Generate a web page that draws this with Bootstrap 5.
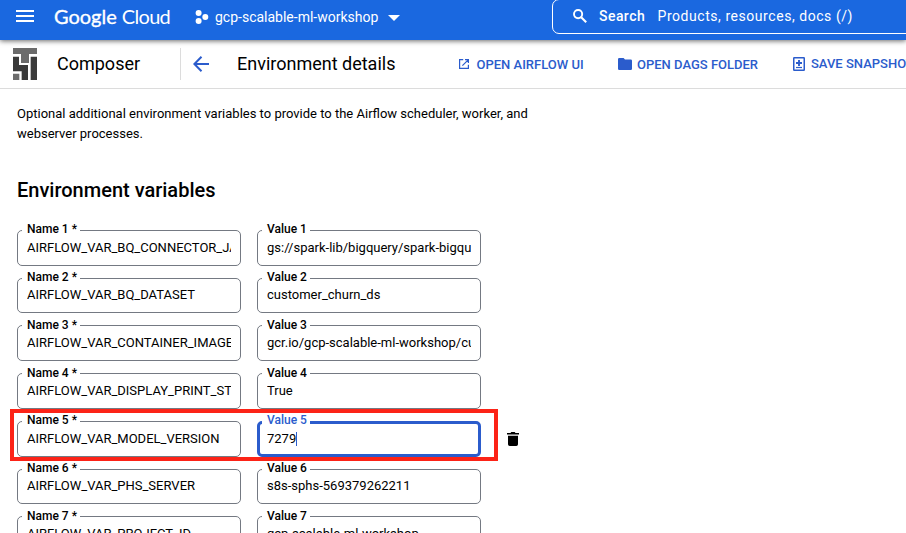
<!DOCTYPE html>
<html lang="en">
<head>
<meta charset="utf-8">
<title>Environment details – Composer</title>
<meta name="viewport" content="width=device-width, initial-scale=1">
<link href="https://cdn.jsdelivr.net/npm/bootstrap@5.3.0/dist/css/bootstrap.min.css" rel="stylesheet">
<script src="https://cdn.jsdelivr.net/npm/bootstrap@5.3.0/dist/js/bootstrap.bundle.min.js"></script>
<style>
  body { font-family: Roboto, "Liberation Sans", sans-serif; color: #000; font-size: 13px; height: 533px; overflow: hidden; }
  svg { display: block; flex: none; }
  .topbar > *, .subbar > * { flex-shrink: 0; }
  .topbar { height: 40px; background: #1a68e0; color: #fff; box-shadow: 0 1px 5px rgba(0,0,0,.6); padding-left: 16px; }
  .burger { margin-top: 10px; }
  .brand { font-family: Lato, Roboto, sans-serif; font-size: 20px; line-height: 32px; margin-left: 20px; width: 121px; }
  .brand .g { -webkit-text-stroke: .35px #fff; }
  .brand .c { letter-spacing: -.7px; margin-left: 5px; }
  .project { font-size: 14px; line-height: 34px; width: 357px; margin-left: 20px; }
  .dots { margin: 10px 6px 0 0; }
  .caret { margin: 15px 0 0 9.5px; }
  .searchbox { width: 362px; height: 35px; margin-top: -1px; border: 1px solid #fff; border-radius: 7px; padding-left: 20px; font-size: 14px; line-height: 32px; }
  .lens { margin: 9px 12px 0 0; }
  .searchbox .s { font-weight: 500; letter-spacing: .45px; width: 58.5px; }
  .searchbox .q { letter-spacing: .55px; }
  .subbar { height: 49px; border-bottom: 1px solid #dcdcdc; padding-left: 13px; }
  .title { font-size: 18px; line-height: 48px; }
  .t1 { margin-left: 20px; width: 123px; }
  .rule { width: 1px; height: 32px; background: #dcdcdc; margin: 8px 12px 0 0; }
  .t2 { margin-left: 28px; width: 222px; }
  .action { color: #2b5ccc; font-weight: 500; line-height: 49px; }
  .open-ui { width: 159px; }
  .open-ui svg { margin: 19px 7.500px 0 0; }
  .open-dags { width: 175px; }
  .open-dags svg { margin: 18px 5px 0 0; }
  .save { line-height: 47px; }
  .save svg { margin: 17px 6px 0 0; }
  .main { padding: 15px 0 0 17px; }
  .intro { width: 530px; line-height: 20px; margin-bottom: 34px; }
  .section-title { font-size: 20px; font-weight: 500; line-height: 24px; margin-bottom: 28px; }
  .vars { display: grid; grid-auto-rows: 35.7px; row-gap: 12.035px; }
  .pair { gap: 16px; }
  .field { width: 224px; height: 35.7px; border: 1px solid #747982; border-radius: 5px; padding: 0 9px; position: relative; }
  .field label { position: absolute; top: -9.55px; left: 4px; padding: 0 3px 0 5px; background: #fff; font-size: 12px; line-height: 16px; font-weight: 500; white-space: nowrap; }
  .value { line-height: 33px; margin-top: -.25px; overflow: hidden; white-space: nowrap; }
  .active { border: 3px solid #2b5ccc; padding: 0 7px; }
  .active label { top: -11.55px; left: 2px; color: #2b5ccc; }
  .active .value { line-height: 29px; }
  .cursor { display: inline-block; width: 1px; height: 14px; background: #2b5ccc; vertical-align: -3px; }
  .marked { position: relative; }
  .marked::after { content: ""; position: absolute; z-index: 1; left: -7px; top: -12px; width: 488px; height: 52px; border: 4px solid #fc2317; pointer-events: none; }
  .bin { margin: 11px 0 0 10px; }
</style>
</head>
<body>
<header class="topbar d-flex align-items-start position-relative">
  <svg class="burger" width="18" height="12" viewBox="0 0 18 12" fill="#fff"><path d="M0 0h18v2H0zM0 5h18v2H0zM0 10h18v2H0z"/></svg>
  <div class="brand text-nowrap"><span class="g">Google</span><span class="c">Cloud</span></div>
  <div class="project d-flex align-items-start">
    <svg class="dots" width="14" height="14" viewBox="0 0 14 14" fill="#fff"><circle cx="3.6" cy="3" r="3"/><circle cx="3.6" cy="11" r="3"/><circle cx="10.3" cy="7" r="3"/></svg>
    <span>gcp-scalable-ml-workshop</span>
    <svg class="caret" width="12" height="6" viewBox="0 0 12 6" fill="#fff"><path d="M0 0h12L6 6z"/></svg>
  </div>
  <div class="searchbox d-flex align-items-start">
    <svg class="lens" width="14" height="14" viewBox="0 0 14 14" fill="none" stroke="#fff"><circle cx="5.1" cy="5.1" r="4.1" stroke-width="1.9"/><path d="M8.2 8.2l5 5" stroke-width="2.1"/></svg>
    <span class="s">Search</span><span class="q text-nowrap">Products, resources, docs (/)</span>
  </div>
</header>

<div class="subbar d-flex align-items-start text-nowrap overflow-hidden">
  <svg class="mt-2" width="24" height="32" viewBox="0 0 72 96"><path fill="#6b6b6b" d="M0 0h72v18H48v27H24V18H0zM0 77h19v19H0z"/><path fill="#3a3a3a" d="M0 26h18v25h27v45H26V70H0zM53 26h19v70H53z"/></svg>
  <div class="title t1">Composer</div>
  <div class="rule"></div>
  <svg class="mt-3" width="16" height="16" viewBox="0 0 16 16" fill="none" stroke="#2b5ccc" stroke-width="2"><path d="M16 8H1.5M8.5.8L1.4 8l7.1 7.2"/></svg>
  <div class="title t2">Environment details</div>
  <div class="action open-ui d-flex align-items-start">
    <svg width="10" height="10" viewBox="0 0 10 10" fill="none" stroke="#2b5ccc" stroke-width="1.2"><path d="M4.2.6H.6v8.8h8.8V5.8M6 .6h3.4V4M9.2.8L3.4 6.6"/></svg>OPEN AIRFLOW UI
  </div>
  <div class="action open-dags d-flex align-items-start">
    <svg width="14" height="12" viewBox="0 0 14 12" fill="#2b5ccc"><path d="M1.2 0H5.6L7 1.5h5.8Q14 1.5 14 2.7v8.1Q14 12 12.8 12H1.2Q0 12 0 10.8V1.2Q0 0 1.2 0z"/></svg>OPEN DAGS FOLDER
  </div>
  <div class="action save d-flex align-items-start">
    <svg width="12" height="14" viewBox="0 0 12 14" fill="none" stroke="#2b5ccc"><rect x=".75" y=".75" width="10.5" height="12.5" rx=".5" stroke-width="1.5"/><path d="M6 3v6M3 6h6" stroke-width="1.9"/><path d="M3 10.5h6" stroke-width="1.2"/></svg>SAVE SNAPSHOT
  </div>
</div>

<main class="main">
  <p class="intro">Optional additional environment variables to provide to the Airflow scheduler, worker, and webserver processes.</p>
  <h2 class="section-title">Environment variables</h2>
  <div class="vars">
    <div class="pair d-flex">
      <div class="field"><label>Name 1 *</label><div class="value">AIRFLOW_VAR_BQ_CONNECTOR_JAR</div></div>
      <div class="field"><label>Value 1</label><div class="value">gs://spark-lib/bigquery/spark-bigquery</div></div>
    </div>
    <div class="pair d-flex">
      <div class="field"><label>Name 2 *</label><div class="value">AIRFLOW_VAR_BQ_DATASET</div></div>
      <div class="field"><label>Value 2</label><div class="value">customer_churn_ds</div></div>
    </div>
    <div class="pair d-flex">
      <div class="field"><label>Name 3 *</label><div class="value">AIRFLOW_VAR_CONTAINER_IMAGE</div></div>
      <div class="field"><label>Value 3</label><div class="value">gcr.io/gcp-scalable-ml-workshop/customer</div></div>
    </div>
    <div class="pair d-flex">
      <div class="field"><label>Name 4 *</label><div class="value">AIRFLOW_VAR_DISPLAY_PRINT_ST</div></div>
      <div class="field"><label>Value 4</label><div class="value">True</div></div>
    </div>
    <div class="pair marked d-flex">
      <div class="field"><label>Name 5 *</label><div class="value">AIRFLOW_VAR_MODEL_VERSION</div></div>
      <div class="field active"><label>Value 5</label><div class="value">7279<span class="cursor"></span></div></div>
      <svg class="bin" width="12" height="14" viewBox="0 0 12 14" fill="#000"><path d="M0 1h3.500l.8-1h3.400l.8 1H12v1.600H0zM1 3.800h10v8.400Q11 14 9.300 14H2.700Q1 14 1 12.200z"/></svg>
    </div>
    <div class="pair d-flex">
      <div class="field"><label>Name 6 *</label><div class="value">AIRFLOW_VAR_PHS_SERVER</div></div>
      <div class="field"><label>Value 6</label><div class="value">s8s-sphs-569379262211</div></div>
    </div>
    <div class="pair d-flex">
      <div class="field"><label>Name 7 *</label><div class="value">AIRFLOW_VAR_PROJECT_ID</div></div>
      <div class="field"><label>Value 7</label><div class="value">gcp-scalable-ml-workshop</div></div>
    </div>
  </div>
</main>
</body>
</html>
